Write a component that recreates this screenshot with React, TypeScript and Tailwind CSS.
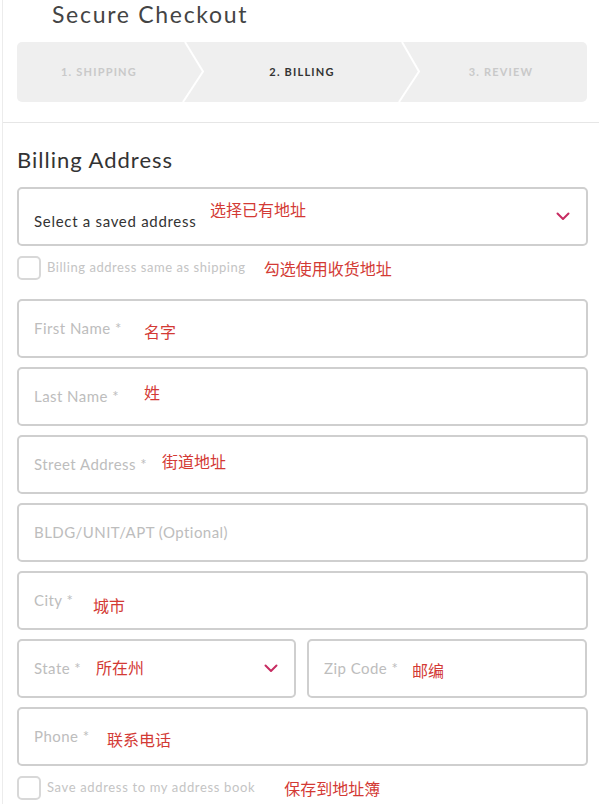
import React from "react";

const UI = { fontFamily: "Lato, 'Open Sans', 'Noto Sans', sans-serif" };
const CJK = { fontFamily: "'Noto Sans CJK SC', 'Noto Sans', sans-serif" };

function Note({ children, className = "" }: { children: React.ReactNode; className?: string }) {
  return (
    <span style={CJK} className={`absolute text-[16px] leading-[16px] text-[#d33a35] whitespace-nowrap ${className}`}>
      {children}
    </span>
  );
}

function Chevron() {
  return (
    <svg width="14" height="9" viewBox="0 0 14 9" className="shrink-0">
      <polyline points="1.5,1.5 7,7 12.5,1.5" fill="none" stroke="#c72c62" strokeWidth="2" strokeLinecap="round" strokeLinejoin="round" />
    </svg>
  );
}

function Field({ label, note, noteClass, chevron, className = "" }: { label: string; note?: string; noteClass?: string; chevron?: boolean; className?: string }) {
  return (
    <div className={`relative h-[59px] border-2 border-[#cfcfcf] rounded-[5px] flex items-center justify-between pl-[15px] pr-[16px] ${className}`}>
      <span className="text-[15px] text-[#bdbdbd] tracking-[0.45px]">{label}</span>
      {chevron && <Chevron />}
      {note && <Note className={noteClass}>{note}</Note>}
    </div>
  );
}

function Check({ label, note, noteGap, track }: { label: string; note: string; noteGap: string; track: string }) {
  return (
    <div className="flex items-center h-[24px]">
      <div className="w-[24px] h-[24px] border-2 border-[#d8d8d8] rounded-[5px] shrink-0" />
      <span className={`ml-[6px] text-[13px] text-[#c4c4c4] ${track}`}>{label}</span>
      <span style={CJK} className={`${noteGap} text-[16px] leading-[16px] text-[#d33a35]`}>{note}</span>
    </div>
  );
}

export default function App() {
  return (
    <div style={UI} className="w-[599px] h-[805px] overflow-hidden bg-white">
      <div className="ml-[2px] border-l border-[#ececec] h-full">
        <div className="pl-[14px] pr-[11px]">
          <div className="h-[43px] pl-[35px]">
            <h1 className="text-[23px] leading-[30px] text-[#444] tracking-[1.7px] font-normal -mt-[1px]">Secure Checkout</h1>
          </div>
          <div className="relative h-[60px] w-[570px] bg-[#efefef] rounded-[5px] flex text-[11px] font-bold tracking-[1.2px]">
            <div className="w-[164px] flex items-center justify-center text-[#c9c9c9]">1. SHIPPING</div>
            <div className="w-[242px] flex items-center justify-center text-[#333]">2. BILLING</div>
            <div className="w-[164px] flex items-center justify-center pr-[8px] text-[#c9c9c9]">3. REVIEW</div>
            <svg className="absolute inset-0" width="570" height="60" viewBox="0 0 570 60">
              <polyline points="168,0 186,29.5 166,60" fill="none" stroke="#fff" strokeWidth="2" />
              <polyline points="385,0 402,29.5 382,60" fill="none" stroke="#fff" strokeWidth="2" />
            </svg>
          </div>
        </div>
        <div className="mt-[20px] border-t border-[#e6e6e6]" />
        <div className="pl-[14px] pr-[11px]">
          <h2 className="mt-[23px] text-[22px] leading-[28px] text-[#333] font-normal tracking-[1px]">Billing Address</h2>
          <div className="relative mt-[13px] h-[59px] border-2 border-[#cfcfcf] rounded-[5px] flex items-center justify-between pl-[15px] pr-[16px]">
            <span className="text-[15px] text-[#333] pt-[10px] tracking-[0.7px]">Select a saved address</span>
            <Chevron />
            <Note className="left-[191px] top-[12px]">选择已有地址</Note>
          </div>
          <div className="mt-[10px]">
            <Check label="Billing address same as shipping" note="勾选使用收货地址" noteGap="ml-[18px]" track="tracking-[0.55px]" />
          </div>
          <div className="mt-[19px] flex flex-col gap-[9px]">
            <Field label="First Name *" note="名字" noteClass="left-[125px] top-[22px]" />
            <Field label="Last Name *" note="姓" noteClass="left-[125px] top-[15px]" />
            <Field label="Street Address *" note="街道地址" noteClass="left-[143px] top-[16px]" />
            <Field label="BLDG/UNIT/APT (Optional)" />
            <Field label="City *" note="城市" noteClass="left-[74px] top-[24px]" />
            <div className="flex gap-[11px]">
              <Field className="w-[279px]" label="State *" note="所在州" noteClass="left-[77px] top-[18px]" chevron />
              <Field className="w-[280px]" label="Zip Code *" note="邮编" noteClass="left-[103px] top-[21px]" />
            </div>
            <Field label="Phone *" note="联系电话" noteClass="left-[88px] top-[22px]" />
          </div>
          <div className="mt-[10px]">
            <Check label="Save address to my address book" note="保存到地址簿" noteGap="ml-[29px]" track="tracking-[0.65px]" />
          </div>
        </div>
      </div>
    </div>
  );
}
